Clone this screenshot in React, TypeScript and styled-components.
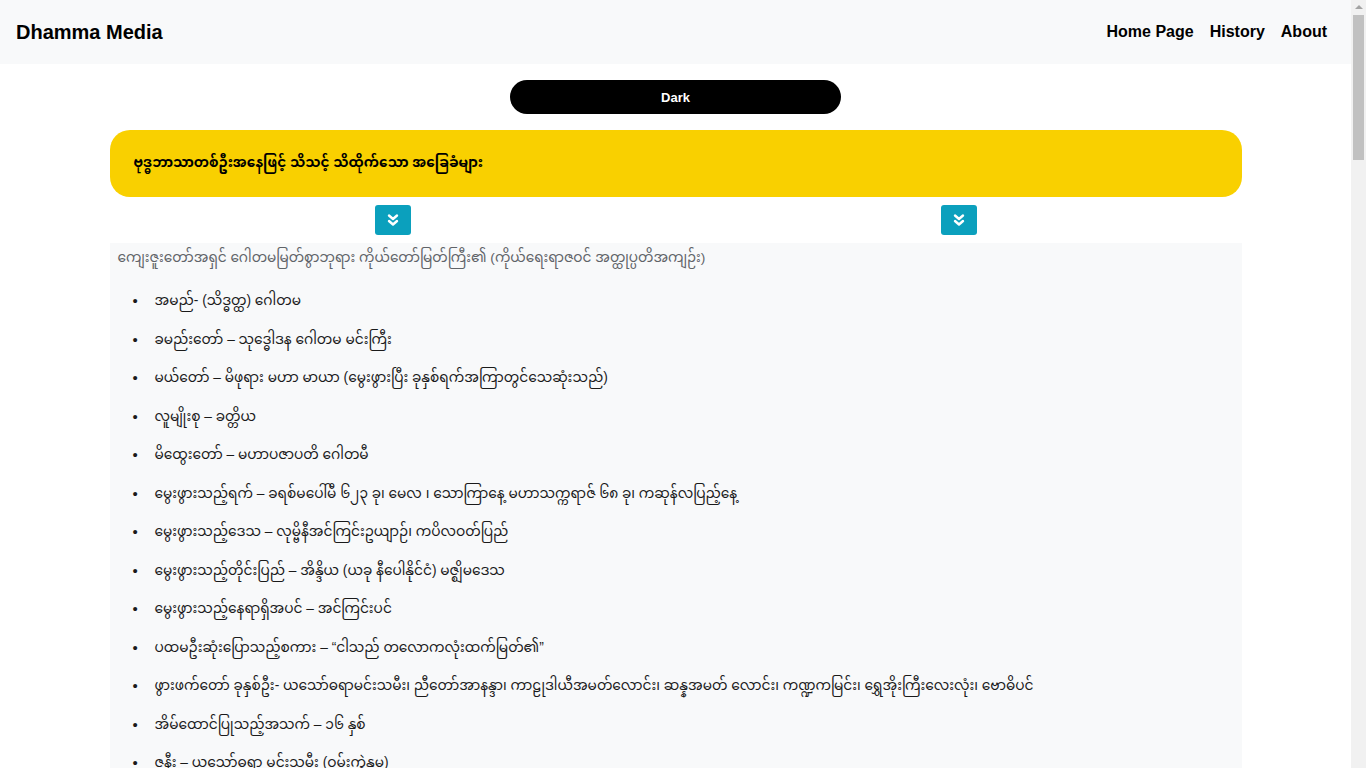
import React, {useState} from 'react';
import styled, {createGlobalStyle} from 'styled-components';

const GlobalStyle = createGlobalStyle`
  body {
    margin: 0;
    background: #fff;
    color: #212529;
    font-family: "Liberation Sans", Arial, "Noto Sans Myanmar", "Noto Sans", sans-serif;
  }
`;

// the page keeps a 15px gutter on the right, like the browser's scrollbar
const Page = styled.div`
  padding-right: 15px;
`;

const ScrollTrack = styled.div`
  position: fixed;
  top: 0;
  right: 0;
  width: 15px;
  height: 100vh;
  background: #f1f1f1;
  display: flex;
  flex-direction: column;
  align-items: center;
`;

const ScrollArrow = styled.div`
  margin-top: 5px;
  width: 0;
  height: 0;
  border-left: 4px solid transparent;
  border-right: 4px solid transparent;
  border-bottom: 4px solid #a3a3a3;
`;

const ScrollThumb = styled.div`
  margin-top: 6px;
  width: 11px;
  height: 145px;
  background: #c1c1c1;
`;

const Nav = styled.nav`
  height: 64px;
  background: #f8f9fa;
  display: flex;
  align-items: center;
  justify-content: space-between;
  padding: 0 24px 0 16px;
`;

const Brand = styled.a`
  font-size: 20px;
  font-weight: bold;
  color: #000;
  text-decoration: none;
`;

const Links = styled.div`
  display: flex;
  gap: 16px;
`;

const NavLink = styled.a`
  font-size: 16px;
  font-weight: bold;
  color: #000;
  text-decoration: none;
`;

const Main = styled.main`
  width: 1132px;
  margin: 0 auto;
  padding-top: 16px;
`;

const ThemeButton = styled.button`
  display: block;
  margin: 0 auto;
  width: 331px;
  height: 34px;
  border: 0;
  border-radius: 17px;
  background: #000;
  color: #fff;
  font-family: "Liberation Sans", Arial, sans-serif;
  font-size: 13px;
  font-weight: bold;
  cursor: pointer;
`;

const Banner = styled.div`
  margin-top: 16px;
  height: 67px;
  border-radius: 20px;
  background: #f9d000;
  display: flex;
  align-items: center;
  padding: 0 24px;
  font-size: 13.7px;
  font-weight: bold;
  color: #000;
`;

const ToggleRow = styled.div`
  display: grid;
  grid-template-columns: 1fr 1fr;
  padding: 8px 0;
  justify-items: center;
`;

const ToggleButton = styled.button`
  width: 36px;
  height: 30px;
  border: 0;
  border-radius: 3px;
  background: #0ba0bd;
  display: flex;
  align-items: center;
  justify-content: center;
  padding: 0;
  cursor: pointer;
`;

const Panel = styled.section`
  background: #f8f9fa;
  padding: 4px 8px 40px;
  min-height: 3100px;
`;

const Intro = styled.p`
  margin: 0;
  font-size: 13.7px;
  line-height: 22px;
  color: #5f6368;
`;

const List = styled.ul`
  margin: 13px 0 0;
  padding-left: 15px;
  list-style: none;
`;

const Item = styled.li`
  display: flex;
  font-size: 13.75px;
  line-height: 22.5px;
  padding: 8px 0;
  color: #1a1a1a;

  &::before {
    content: "•";
    flex: 0 0 22px;
    font-family: "Liberation Sans", Arial, sans-serif;
    font-size: 15px;
  }
`;

const items = [
  'အမည်- (သိဒ္ဓတ္ထ) ဂေါတမ',
  'ခမည်းတော် – သုဒ္ဓေါဒန ဂေါတမ မင်းကြီး',
  'မယ်တော် – မိဖုရား မဟာ မာယာ (မွေးဖွားပြီး ခုနှစ်ရက်အကြာတွင်သေဆုံးသည်)',
  'လူမျိုးစု – ခတ္တိယ',
  'မိထွေးတော် – မဟာပဇာပတိ ဂေါတမီ',
  'မွေးဖွားသည့်ရက် – ခရစ်မပေါ်မီ ၆၂၃ ခု၊ မေလ ၊ သောကြာနေ့ မဟာသက္ကရာဇ် ၆၈ ခု၊ ကဆုန်လပြည့်နေ့',
  'မွေးဖွားသည့်ဒေသ – လုမ္ဗိနီအင်ကြင်းဥယျာဉ်၊ ကပိလဝတ်ပြည်',
  'မွေးဖွားသည့်တိုင်းပြည် – အိန္ဒိယ (ယခု နီပေါနိုင်ငံ) မဇ္ဈိမဒေသ',
  'မွေးဖွားသည့်နေရာရှိအပင် – အင်ကြင်းပင်',
  'ပထမဦးဆုံးပြောသည့်စကား – “ငါသည် တလောကလုံးထက်မြတ်၏”',
  'ဖွားဖက်တော် ခုနှစ်ဦး- ယသော်ဓရာမင်းသမီး၊ ညီတော်အာနန္ဒာ၊ ကာဠုဒါယီအမတ်လောင်း၊ ဆန္နအမတ် လောင်း၊ ကဏ္ဍကမြင်း၊ ရွှေအိုးကြီးလေးလုံး၊ ဗောဓိပင်',
  'အိမ်ထောင်ပြုသည့်အသက် – ၁၆ နှစ်',
  'ဇနီး – ယသော်ဓရာ မင်းသမီး (ဝမ်းကွဲနှမ)',
  'သား – ရာဟုလာ',
  'တောထွက်သည့်အသက် – ၂၉ နှစ်',
  'ဒုက္ကရစရိယာ ကျင့်သည့်ကာလ – ၆ နှစ်',
  'ဘုရားဖြစ်သည့်အသက် – ၃၅ နှစ်',
  'ပရိနိဗ္ဗာန်စံသည့်အသက် – ၈၀ နှစ်',
];

function Chevrons() {
  return (
    <svg width="12" height="14" viewBox="0 0 12 14" fill="none" stroke="#fff" strokeWidth="2.4"
         strokeLinecap="round" strokeLinejoin="round">
      <path d="M2 2.5 L6 6 L10 2.5"/>
      <path d="M2 8 L6 11.5 L10 8"/>
    </svg>
  );
}

export default function App() {
  const [dark, setDark] = useState(false);
  return (
    <Page>
      <GlobalStyle/>
      <Nav>
        <Brand href="#">Dhamma Media</Brand>
        <Links>
          <NavLink href="#">Home Page</NavLink>
          <NavLink href="#">History</NavLink>
          <NavLink href="#">About</NavLink>
        </Links>
      </Nav>
      <Main>
        <ThemeButton onClick={() => setDark(!dark)}>Dark</ThemeButton>
        <Banner>ဗုဒ္ဓဘာသာတစ်ဦးအနေဖြင့် သိသင့် သိထိုက်သော အခြေခံများ</Banner>
        <ToggleRow>
          <ToggleButton aria-label="expand"><Chevrons/></ToggleButton>
          <ToggleButton aria-label="expand"><Chevrons/></ToggleButton>
        </ToggleRow>
        <Panel>
          <Intro>ကျေးဇူးတော်အရှင် ဂေါတမမြတ်စွာဘုရား ကိုယ်တော်မြတ်ကြီး၏ (ကိုယ်ရေးရာဇဝင် အတ္ထုပ္ပတိအကျဉ်း)</Intro>
          <List>
            {items.map(text => <Item key={text}>{text}</Item>)}
          </List>
        </Panel>
      </Main>
      <ScrollTrack>
        <ScrollArrow/>
        <ScrollThumb/>
      </ScrollTrack>
    </Page>
  );
}
